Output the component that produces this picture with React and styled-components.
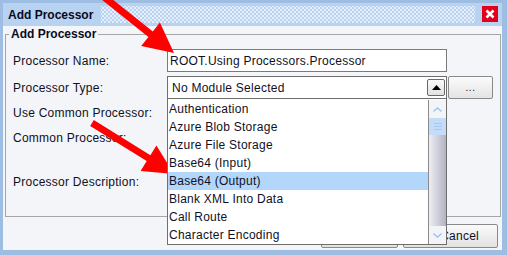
import React from 'react'
import styled, { createGlobalStyle } from 'styled-components'

const GlobalStyle = createGlobalStyle`
  html, body {
    margin: 0;
    padding: 0;
    background: #9dbde3;
  }
  body {
    font-family: "Liberation Sans", Arial, sans-serif;
    font-size: 12px;
    letter-spacing: 0.25px;
    color: #101024;
  }
`

const processors = [
  'Authentication',
  'Azure Blob Storage',
  'Azure File Storage',
  'Base64 (Input)',
  'Base64 (Output)',
  'Blank XML Into Data',
  'Call Route',
  'Character Encoding',
]

// builds an arrow polygon from tail to tip
const arrowPoints = (tx, ty, px, py, shaft = 7, headW = 30, headL = 30) => {
  const dx = px - tx
  const dy = py - ty
  const len = Math.hypot(dx, dy)
  const ux = dx / len
  const uy = dy / len
  const nx = -uy
  const ny = ux
  const bx = px - ux * headL
  const by = py - uy * headL
  const pts = [
    [tx + nx * shaft / 2, ty + ny * shaft / 2],
    [bx + nx * shaft / 2, by + ny * shaft / 2],
    [bx + nx * headW / 2, by + ny * headW / 2],
    [px, py],
    [bx - nx * headW / 2, by - ny * headW / 2],
    [bx - nx * shaft / 2, by - ny * shaft / 2],
    [tx - nx * shaft / 2, ty - ny * shaft / 2],
  ]
  return pts.map(p => p.map(v => v.toFixed(1)).join(',')).join(' ')
}

const App = () => {
  return (
    <Stage>
      <GlobalStyle />
      <Window>
        <TitleBar>
          <Title>Add Processor</Title>
          <Dots />
          <CloseBtn>
            <svg width="16" height="16" viewBox="0 0 16 16">
              <rect width="16" height="16" fill="#e3001b" />
              <path d="M4.5 4.5 L11.5 11.5 M11.5 4.5 L4.5 11.5" stroke="#fff" strokeWidth="2.6" />
            </svg>
          </CloseBtn>
        </TitleBar>
        <Body>
          <Group>
            <Legend>Add Processor</Legend>
            <Form>
              <Label>Processor Name:</Label>
              <TextBox>ROOT.Using Processors.Processor</TextBox>

              <Label>Processor Type:</Label>
              <FieldRow>
                <ComboWrap>
                  <Combo>
                    <ComboText>No Module Selected</ComboText>
                    <ComboArrow>
                      <svg width="9" height="5" viewBox="0 0 9 5">
                        <path d="M0 5 L4.5 0 L9 5 Z" fill="#000" />
                      </svg>
                    </ComboArrow>
                  </Combo>
                  <DropList>
                    <Items>
                      {processors.map(p => (
                        <Item key={p} $active={p === 'Base64 (Output)'}>{p}</Item>
                      ))}
                    </Items>
                    <ScrollBar>
                      <ScrollBtn>
                        <svg width="9" height="5" viewBox="0 0 9 5">
                          <path d="M0.5 4.5 L4.5 0.8 L8.5 4.5" stroke="#9bbce6" strokeWidth="1.2" fill="none" />
                        </svg>
                      </ScrollBtn>
                      <Thumb>
                        <Grip />
                        <Grip />
                        <Grip />
                      </Thumb>
                      <Track />
                      <ScrollBtn>
                        <svg width="9" height="5" viewBox="0 0 9 5">
                          <path d="M0.5 0.5 L4.5 4.2 L8.5 0.5" stroke="#9bbce6" strokeWidth="1.2" fill="none" />
                        </svg>
                      </ScrollBtn>
                    </ScrollBar>
                  </DropList>
                </ComboWrap>
                <SmallBtn>...</SmallBtn>
              </FieldRow>

              <Label>Use Common Processor:</Label>
              <span />

              <Label>Common Processor:</Label>
              <span />

              <Label>Processor Description:</Label>
              <span />
            </Form>
          </Group>
          <Buttons>
            <Button $w={77}>OK</Button>
            <Button $w={95}>Cancel</Button>
          </Buttons>
        </Body>
      </Window>
      <Overlay width="507" height="255" viewBox="0 0 507 255">
        <polygon points={arrowPoints(104, -3, 174, 53)} fill="#ff0000" />
        <polygon points={arrowPoints(92, 123, 174, 174)} fill="#ff0000" />
      </Overlay>
    </Stage>
  )
}

export default App

const Stage = styled.div`
  position: relative;
  width: 507px;
  height: 255px;
  overflow: hidden;
`
const Window = styled.div`
  width: 507px;
  height: 255px;
  box-sizing: border-box;
  border: solid #9dbde3;
  border-width: 3px 5px 5px 3px;
  display: flex;
  flex-direction: column;
  background: #f3f5f8;
`
const TitleBar = styled.div`
  height: 23px;
  flex-shrink: 0;
  background: #b8d3f1;
  display: flex;
  align-items: center;
  padding: 0 4px 0 5px;
`
const Title = styled.div`
  font-weight: bold;
  font-size: 12px;
  letter-spacing: 0;
  color: #0a0a1e;
`
const Dots = styled.div`
  flex: 1;
  height: 17px;
  margin: 0 7px 0 8px;
  background-image:
    radial-gradient(circle, #ffffff 0.6px, transparent 0.9px),
    radial-gradient(circle, #ffffff 0.6px, transparent 0.9px);
  background-size: 4px 4px;
  background-position: 0 0, 2px 2px;
`
const CloseBtn = styled.div`
  width: 16px;
  height: 16px;
  display: flex;
  margin-top: -1px;
`
const Body = styled.div`
  flex: 1;
  display: flex;
  flex-direction: column;
  padding: 1px 1px 0 2px;
`
const Group = styled.fieldset`
  margin: 0;
  padding: 0 0 4px 0;
  border: 1px solid #a6a6a6;
  min-width: 0;
`
const Legend = styled.legend`
  margin-left: 3px;
  padding: 0 2px;
  font-weight: bold;
  font-size: 12px;
  letter-spacing: 0;
  line-height: 14px;
  color: #0a0a1e;
`
const Form = styled.div`
  display: grid;
  grid-template-columns: 154px auto;
  grid-template-rows: 24px 23px 22px 22px 60px;
  row-gap: 3px;
  align-items: center;
  margin: 8px 0 0 7px;
`
const Label = styled.div`
  white-space: nowrap;
`
const TextBox = styled.div`
  align-self: start;
  width: 280px;
  height: 23px;
  box-sizing: border-box;
  border: 1px solid #7a7a7a;
  background: #fff;
  padding-left: 2px;
  display: flex;
  align-items: center;
`
const FieldRow = styled.div`
  display: flex;
  gap: 1px;
  height: 23px;
`
const ComboWrap = styled.div`
  position: relative;
  width: 280px;
  height: 23px;
`
const Combo = styled.div`
  height: 100%;
  box-sizing: border-box;
  border: 1px solid #6e6e6e;
  background: #fff;
  display: flex;
  align-items: center;
  padding: 0 1px 0 4px;
`
const ComboText = styled.div`
  flex: 1;
`
const ComboArrow = styled.div`
  width: 18px;
  height: 17px;
  box-sizing: border-box;
  border: 1px solid #6a6a6a;
  border-radius: 2px;
  background: linear-gradient(#fafafa, #e2e2e2);
  display: flex;
  align-items: center;
  justify-content: center;
`
const DropList = styled.div`
  position: absolute;
  top: 100%;
  left: 0;
  width: 280px;
  height: 146px;
  box-sizing: border-box;
  border: 1px solid #6e6e6e;
  border-top: none;
  padding-top: 1px;
  background: #fff;
  display: flex;
  z-index: 2;
`
const Items = styled.div`
  flex: 1;
  display: flex;
  flex-direction: column;
`
const Item = styled.div`
  height: 18px;
  line-height: 18px;
  padding-left: 1px;
  white-space: nowrap;
  background: ${p => (p.$active ? '#b3d6fb' : 'transparent')};
`
const ScrollBar = styled.div`
  width: 17px;
  border-left: 1px solid #8a8a8a;
  display: flex;
  flex-direction: column;
`
const ScrollBtn = styled.div`
  height: 18px;
  background: #f3f4f7;
  display: flex;
  align-items: center;
  justify-content: center;
`
const Thumb = styled.div`
  height: 17px;
  background: #c3dcf9;
  display: flex;
  flex-direction: column;
  align-items: center;
  justify-content: center;
  gap: 2px;
`
const Grip = styled.div`
  width: 8px;
  height: 1px;
  background: #a9c6ee;
`
const Track = styled.div`
  flex: 1;
  background: linear-gradient(90deg, #eeeff3, #b2b3c2);
`
const SmallBtn = styled.div`
  width: 45px;
  height: 23px;
  box-sizing: border-box;
  border: 1px solid #8a8a8a;
  border-radius: 2px;
  background: linear-gradient(#fbfbfb, #e4e4e4);
  display: flex;
  align-items: center;
  justify-content: center;
  font-size: 10px;
  letter-spacing: 0.5px;
`
const Buttons = styled.div`
  display: flex;
  justify-content: flex-end;
  gap: 5px;
  margin-top: 7px;
  padding-right: 3px;
`
const Button = styled.div`
  width: ${p => p.$w}px;
  height: 24px;
  box-sizing: border-box;
  border: 1px solid #8a8a8a;
  border-radius: 2px;
  background: linear-gradient(#fbfbfb, #e2e2e2);
  display: flex;
  align-items: center;
  justify-content: flex-end;
  padding-right: 18px;
`
const Overlay = styled.svg`
  position: absolute;
  top: 0;
  left: 0;
  pointer-events: none;
`
